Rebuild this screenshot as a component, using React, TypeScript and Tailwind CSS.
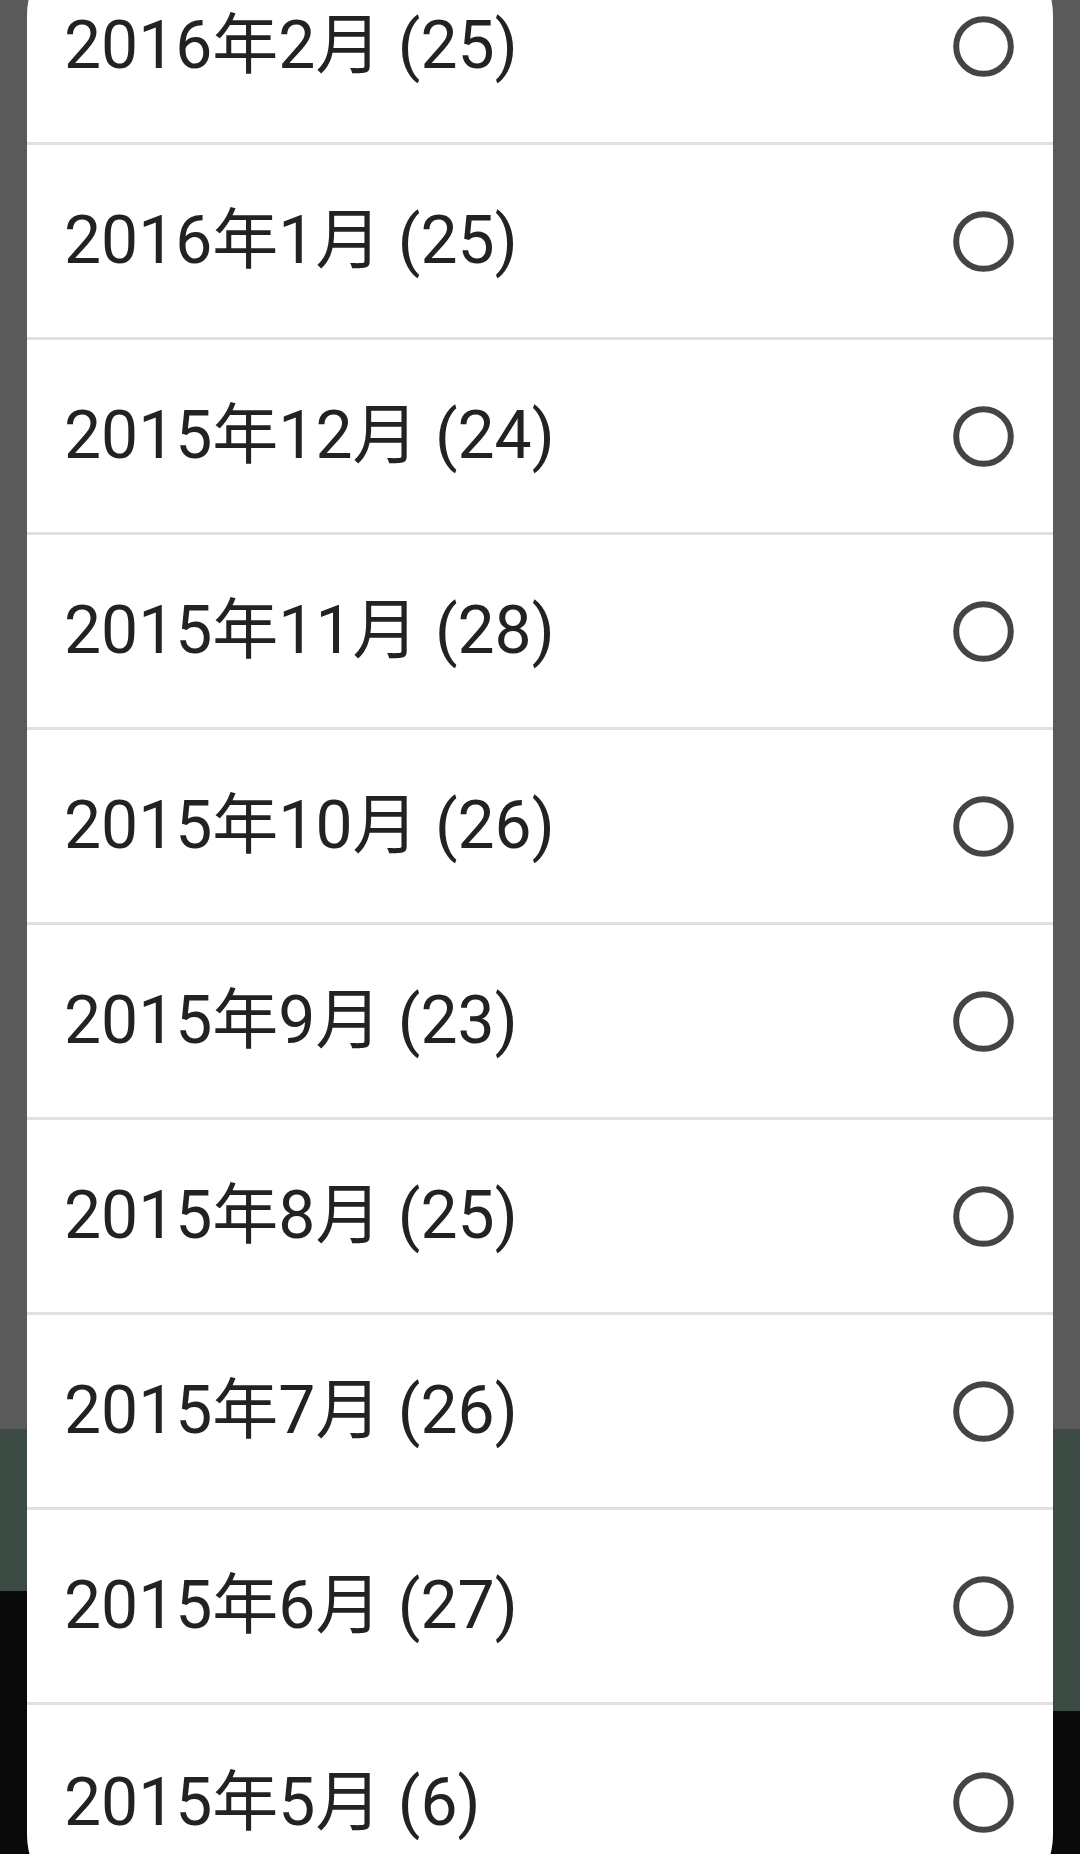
const months = [
  { label: '2016年2月', count: 25 },
  { label: '2016年1月', count: 25 },
  { label: '2015年12月', count: 24 },
  { label: '2015年11月', count: 28 },
  { label: '2015年10月', count: 26 },
  { label: '2015年9月', count: 23 },
  { label: '2015年8月', count: 25 },
  { label: '2015年7月', count: 26 },
  { label: '2015年6月', count: 27 },
  { label: '2015年5月', count: 6 },
];

function Radio() {
  return (
    <svg width="61" height="61" viewBox="0 0 61 61" className="shrink-0">
      <circle cx="30.5" cy="30.5" r="27.3" fill="none" stroke="#444444" strokeWidth="6" />
    </svg>
  );
}

export default function App() {
  return (
    <div className="relative flex h-[1854px] w-[1080px] flex-col overflow-hidden bg-[#5a5a5a]">
      {/* scrim over the app behind the dialog */}
      <div className="h-[1429px] bg-[#5a5a5a]" />
      <div className="h-[162px] bg-[#3b4a43]" />
      <div className="flex flex-1">
        <div className="flex-1 bg-[#0a0a0a]" />
        <div className="flex w-[80px] flex-col">
          <div className="h-[120px] bg-[#3b4a43]" />
          <div className="flex-1 bg-[#0a0a0a]" />
        </div>
      </div>

      <div className="absolute left-[27px] right-[27px] top-[-58px] rounded-[73px] bg-white pt-[8px] pb-[8px]">
        {months.map((m, i) => (
          <div
            key={m.label}
            className={
              i < months.length - 1
                ? 'flex h-[195px] items-center border-b-[3px] border-[#e0e0e0] pl-[37px] pr-[39px]'
                : 'flex h-[195px] items-center pl-[37px] pr-[39px]'
            }
          >
            <span
              className="flex-1 text-[66px] leading-none text-[#222222]"
              style={{ fontFamily: 'Roboto, "Noto Sans CJK JP", sans-serif' }}
            >
              {m.label} ({m.count})
            </span>
            <Radio />
          </div>
        ))}
      </div>
    </div>
  );
}
